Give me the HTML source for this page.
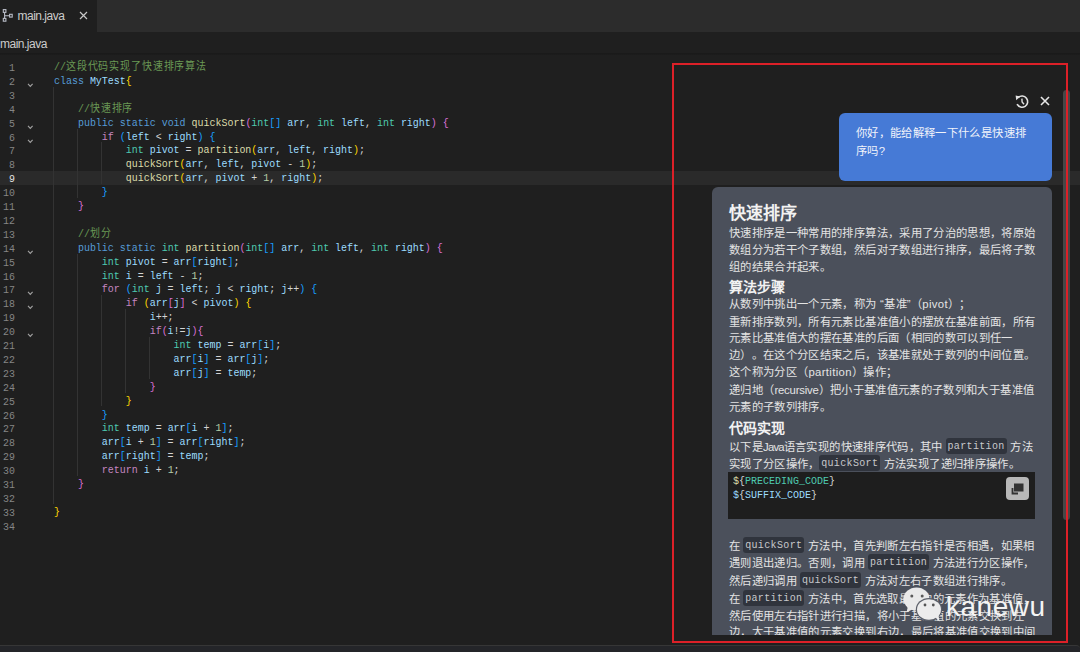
<!DOCTYPE html>
<html lang="zh-CN"><head><meta charset="utf-8">
<style>
*{margin:0;padding:0;box-sizing:border-box}
html,body{text-spacing-trim:space-all;width:1080px;height:652px;overflow:hidden;background:#1f1f1f;font-family:"Liberation Sans",sans-serif}
.abs{position:absolute}
#tabbar{left:0;top:0;width:1080px;height:32px;background:#2c2c2c}
#tab{left:0;top:0;width:97px;height:32px;background:#1f1f1f}
#crumb{left:0;top:32px;width:1080px;height:21px;background:#1f1f1f}
#shadow{left:0;top:53px;width:1080px;height:2px;background:linear-gradient(#191919,#1c1c1c)}
.tabtxt{color:#cccccc;font-size:12px;letter-spacing:-0.5px;white-space:nowrap}
#editor{left:0;top:55px;width:1080px;height:588px}
.hl{left:0;width:1080px;height:13.9px;background:#2a2a2a}
.ln{left:-5px;width:20px;text-align:right;transform-origin:100% 0;transform:scaleX(0.84);font-family:"Liberation Mono",monospace;font-size:11.8px;color:#858585;white-space:nowrap}
.ln.cur{color:#e2e2e2}
.cl{left:53.5px;font-family:"Liberation Mono",monospace;font-size:11.3px;white-space:pre;transform-origin:0 0;transform:scaleX(0.882);color:#d4d4d4;line-height:13.9px}
.fold{left:27px;width:6px;height:4px}
.guide{width:1px;background:#333333}
.c{color:#6a9955}.cj{letter-spacing:1.29px}.k{color:#569cd6}.t{color:#4ec9b0}.f{color:#c586c0}.v{color:#9cdcfe}.fn{color:#dcdcaa}.n{color:#b5cea8}
.b1{color:#ffd700}.b2{color:#da70d6}.b3{color:#179fff}

#redbox{left:672px;top:63px;width:396px;height:580px;border:2px solid #dc2028}
#sbar{left:1063px;top:90px;width:7px;height:430px;background:#474747;border-radius:3.5px}
#bubble{left:839px;top:113px;width:213px;height:68px;background:#467ad6;border-radius:6px}
.btxt{font-weight:500;font-size:11.33px;letter-spacing:0.35px;line-height:16px;color:#f0f3fa;white-space:nowrap}
#apanel{left:712px;top:187px;width:340px;height:448px;background:#4b505b;border-radius:6px 6px 0 0;overflow:hidden}
.pl{font-weight:500;font-size:11.33px;letter-spacing:0.35px;line-height:16px;color:#e4e4e4;white-space:nowrap}
.h1{font-size:17px;line-height:20px;font-weight:bold;color:#f2f2f2;white-space:nowrap}
.h2{font-size:14px;line-height:17px;font-weight:bold;color:#f2f2f2;white-space:nowrap}
.ic{font-family:"Liberation Mono",monospace;font-size:10px;color:#c8c9cc;background:#30343d;border-radius:3px;padding:2.5px 2px;margin-left:-0.7px;position:relative;top:-2.2px}
#cblock{left:16px;top:285px;width:307px;height:47px;background:#1e1e1e}
.cbl{left:5px;font-family:"Liberation Mono",monospace;font-size:11.3px;line-height:13.9px;white-space:pre;transform-origin:0 0;transform:scaleX(0.885)}
.o{color:#d4d4d4}.lt{letter-spacing:-0.2px}
#copy{left:278px;top:5px;width:23px;height:23px;background:#b8b8b8;border-radius:4px}
#wm{left:903px;top:587px;width:42px;height:36px}
#wmt{left:946px;top:590.5px;font-size:28px;letter-spacing:0.5px;line-height:32px;color:#f4f4f4;white-space:nowrap}
#bottom{left:0;top:644.5px;width:1080px;height:8px;background:#242529;border-top:1px solid #363636;border-top-right-radius:4px}
</style></head><body>
<div id="tabbar" class="abs"></div>
<div id="tab" class="abs"></div>
<div id="crumb" class="abs"></div>
<div id="shadow" class="abs"></div>
<div class="abs tabtxt" style="left:17.5px;top:8.5px">main.java</div>
<svg class="abs" style="left:2px;top:8px" width="12" height="14" viewBox="0 0 12 14"><rect x="1.3" y="1.6" width="2.6" height="2.8" fill="none" stroke="#b9bdc8" stroke-width="1.1"/><rect x="1.3" y="10.4" width="2.6" height="2.8" fill="none" stroke="#b9bdc8" stroke-width="1.1"/><rect x="7.6" y="6.3" width="2.6" height="2.8" fill="none" stroke="#b9bdc8" stroke-width="1.1"/><path d="M2.6 4.4 V10.4 M2.6 7.7 H7.6" stroke="#b9bdc8" stroke-width="1.1"/></svg>
<svg class="abs" style="left:78.5px;top:11px" width="9" height="9" viewBox="0 0 9 9"><path d="M1 1 L8 8 M8 1 L1 8" stroke="#c8c8c8" stroke-width="1.2"/></svg>
<div class="abs tabtxt" style="left:0px;top:36.5px">main.java</div>

<div class="abs hl" style="top:171.20px"></div>
<div class="abs guide" style="left:53px;top:86.80px;height:417.00px"></div>
<div class="abs guide" style="left:77px;top:128.50px;height:69.50px"></div>
<div class="abs guide" style="left:77px;top:253.60px;height:222.40px"></div>
<div class="abs guide" style="left:101px;top:142.40px;height:41.70px"></div>
<div class="abs guide" style="left:101px;top:295.30px;height:111.20px"></div>
<div class="abs guide" style="left:125px;top:309.20px;height:83.40px"></div>
<div class="abs guide" style="left:149px;top:337.00px;height:41.70px"></div>
<div class="abs ln" style="top:62.00px;line-height:13.9px">1</div>
<div class="abs ln" style="top:75.90px;line-height:13.9px">2</div>
<div class="abs ln" style="top:89.80px;line-height:13.9px">3</div>
<div class="abs ln" style="top:103.70px;line-height:13.9px">4</div>
<div class="abs ln" style="top:117.60px;line-height:13.9px">5</div>
<div class="abs ln" style="top:131.50px;line-height:13.9px">6</div>
<div class="abs ln" style="top:145.40px;line-height:13.9px">7</div>
<div class="abs ln" style="top:159.30px;line-height:13.9px">8</div>
<div class="abs ln cur" style="top:173.20px;line-height:13.9px">9</div>
<div class="abs ln" style="top:187.10px;line-height:13.9px">10</div>
<div class="abs ln" style="top:201.00px;line-height:13.9px">11</div>
<div class="abs ln" style="top:214.90px;line-height:13.9px">12</div>
<div class="abs ln" style="top:228.80px;line-height:13.9px">13</div>
<div class="abs ln" style="top:242.70px;line-height:13.9px">14</div>
<div class="abs ln" style="top:256.60px;line-height:13.9px">15</div>
<div class="abs ln" style="top:270.50px;line-height:13.9px">16</div>
<div class="abs ln" style="top:284.40px;line-height:13.9px">17</div>
<div class="abs ln" style="top:298.30px;line-height:13.9px">18</div>
<div class="abs ln" style="top:312.20px;line-height:13.9px">19</div>
<div class="abs ln" style="top:326.10px;line-height:13.9px">20</div>
<div class="abs ln" style="top:340.00px;line-height:13.9px">21</div>
<div class="abs ln" style="top:353.90px;line-height:13.9px">22</div>
<div class="abs ln" style="top:367.80px;line-height:13.9px">23</div>
<div class="abs ln" style="top:381.70px;line-height:13.9px">24</div>
<div class="abs ln" style="top:395.60px;line-height:13.9px">25</div>
<div class="abs ln" style="top:409.50px;line-height:13.9px">26</div>
<div class="abs ln" style="top:423.40px;line-height:13.9px">27</div>
<div class="abs ln" style="top:437.30px;line-height:13.9px">28</div>
<div class="abs ln" style="top:451.20px;line-height:13.9px">29</div>
<div class="abs ln" style="top:465.10px;line-height:13.9px">30</div>
<div class="abs ln" style="top:479.00px;line-height:13.9px">31</div>
<div class="abs ln" style="top:492.90px;line-height:13.9px">32</div>
<div class="abs ln" style="top:506.80px;line-height:13.9px">33</div>
<div class="abs ln" style="top:520.70px;line-height:13.9px">34</div>
<svg class="abs" style="left:27px;top:82.90px" width="7" height="5" viewBox="0 0 7 5"><path d="M1 0.9 L3.3 3.3 L5.6 0.9" fill="none" stroke="#a0a0a0" stroke-width="1.15"/></svg>
<svg class="abs" style="left:27px;top:124.60px" width="7" height="5" viewBox="0 0 7 5"><path d="M1 0.9 L3.3 3.3 L5.6 0.9" fill="none" stroke="#a0a0a0" stroke-width="1.15"/></svg>
<svg class="abs" style="left:27px;top:138.50px" width="7" height="5" viewBox="0 0 7 5"><path d="M1 0.9 L3.3 3.3 L5.6 0.9" fill="none" stroke="#a0a0a0" stroke-width="1.15"/></svg>
<svg class="abs" style="left:27px;top:249.70px" width="7" height="5" viewBox="0 0 7 5"><path d="M1 0.9 L3.3 3.3 L5.6 0.9" fill="none" stroke="#a0a0a0" stroke-width="1.15"/></svg>
<svg class="abs" style="left:27px;top:291.40px" width="7" height="5" viewBox="0 0 7 5"><path d="M1 0.9 L3.3 3.3 L5.6 0.9" fill="none" stroke="#a0a0a0" stroke-width="1.15"/></svg>
<svg class="abs" style="left:27px;top:305.30px" width="7" height="5" viewBox="0 0 7 5"><path d="M1 0.9 L3.3 3.3 L5.6 0.9" fill="none" stroke="#a0a0a0" stroke-width="1.15"/></svg>
<svg class="abs" style="left:27px;top:333.10px" width="7" height="5" viewBox="0 0 7 5"><path d="M1 0.9 L3.3 3.3 L5.6 0.9" fill="none" stroke="#a0a0a0" stroke-width="1.15"/></svg>
<div class="abs cl" style="top:61.00px"><span class="c">//</span><span class="c cj">这段代码实现了快速排序算法</span></div>
<div class="abs cl" style="top:74.90px"><span class="k">class</span> <span class="v">MyTest</span><span class="b1">{</span></div>
<div class="abs cl" style="top:102.70px">    <span class="c">//</span><span class="c cj">快速排序</span></div>
<div class="abs cl" style="top:116.60px">    <span class="k">public</span> <span class="k">static</span> <span class="k">void</span> <span class="fn">quickSort</span><span class="b2">(</span><span class="t">int</span><span class="b3">[]</span> <span class="v">arr</span>, <span class="t">int</span> <span class="v">left</span>, <span class="t">int</span> <span class="v">right</span><span class="b2">)</span> <span class="b2">{</span></div>
<div class="abs cl" style="top:130.50px">        <span class="f">if</span> <span class="b3">(</span><span class="v">left</span> &lt; <span class="v">right</span><span class="b3">)</span> <span class="b3">{</span></div>
<div class="abs cl" style="top:144.40px">            <span class="t">int</span> <span class="v">pivot</span> = <span class="fn">partition</span><span class="b1">(</span><span class="v">arr</span>, <span class="v">left</span>, <span class="v">right</span><span class="b1">)</span>;</div>
<div class="abs cl" style="top:158.30px">            <span class="fn">quickSort</span><span class="b1">(</span><span class="v">arr</span>, <span class="v">left</span>, <span class="v">pivot</span> - <span class="n">1</span><span class="b1">)</span>;</div>
<div class="abs cl" style="top:172.20px">            <span class="fn">quickSort</span><span class="b1">(</span><span class="v">arr</span>, <span class="v">pivot</span> + <span class="n">1</span>, <span class="v">right</span><span class="b1">)</span>;</div>
<div class="abs cl" style="top:186.10px">        <span class="b3">}</span></div>
<div class="abs cl" style="top:200.00px">    <span class="b2">}</span></div>
<div class="abs cl" style="top:227.80px">    <span class="c">//</span><span class="c cj">划分</span></div>
<div class="abs cl" style="top:241.70px">    <span class="k">public</span> <span class="k">static</span> <span class="t">int</span> <span class="fn">partition</span><span class="b2">(</span><span class="t">int</span><span class="b3">[]</span> <span class="v">arr</span>, <span class="t">int</span> <span class="v">left</span>, <span class="t">int</span> <span class="v">right</span><span class="b2">)</span> <span class="b2">{</span></div>
<div class="abs cl" style="top:255.60px">        <span class="t">int</span> <span class="v">pivot</span> = <span class="v">arr</span><span class="b3">[</span><span class="v">right</span><span class="b3">]</span>;</div>
<div class="abs cl" style="top:269.50px">        <span class="t">int</span> <span class="v">i</span> = <span class="v">left</span> - <span class="n">1</span>;</div>
<div class="abs cl" style="top:283.40px">        <span class="f">for</span> <span class="b3">(</span><span class="t">int</span> <span class="v">j</span> = <span class="v">left</span>; <span class="v">j</span> &lt; <span class="v">right</span>; <span class="v">j</span>++<span class="b3">)</span> <span class="b3">{</span></div>
<div class="abs cl" style="top:297.30px">            <span class="f">if</span> <span class="b1">(</span><span class="v">arr</span><span class="b2">[</span><span class="v">j</span><span class="b2">]</span> &lt; <span class="v">pivot</span><span class="b1">)</span> <span class="b1">{</span></div>
<div class="abs cl" style="top:311.20px">                <span class="v">i</span>++;</div>
<div class="abs cl" style="top:325.10px">                <span class="f">if</span><span class="b2">(</span><span class="v">i</span>!=<span class="v">j</span><span class="b2">)</span><span class="b2">{</span></div>
<div class="abs cl" style="top:339.00px">                    <span class="t">int</span> <span class="v">temp</span> = <span class="v">arr</span><span class="b3">[</span><span class="v">i</span><span class="b3">]</span>;</div>
<div class="abs cl" style="top:352.90px">                    <span class="v">arr</span><span class="b3">[</span><span class="v">i</span><span class="b3">]</span> = <span class="v">arr</span><span class="b3">[</span><span class="v">j</span><span class="b3">]</span>;</div>
<div class="abs cl" style="top:366.80px">                    <span class="v">arr</span><span class="b3">[</span><span class="v">j</span><span class="b3">]</span> = <span class="v">temp</span>;</div>
<div class="abs cl" style="top:380.70px">                <span class="b2">}</span></div>
<div class="abs cl" style="top:394.60px">            <span class="b1">}</span></div>
<div class="abs cl" style="top:408.50px">        <span class="b3">}</span></div>
<div class="abs cl" style="top:422.40px">        <span class="t">int</span> <span class="v">temp</span> = <span class="v">arr</span><span class="b3">[</span><span class="v">i</span> + <span class="n">1</span><span class="b3">]</span>;</div>
<div class="abs cl" style="top:436.30px">        <span class="v">arr</span><span class="b3">[</span><span class="v">i</span> + <span class="n">1</span><span class="b3">]</span> = <span class="v">arr</span><span class="b3">[</span><span class="v">right</span><span class="b3">]</span>;</div>
<div class="abs cl" style="top:450.20px">        <span class="v">arr</span><span class="b3">[</span><span class="v">right</span><span class="b3">]</span> = <span class="v">temp</span>;</div>
<div class="abs cl" style="top:464.10px">        <span class="f">return</span> <span class="v">i</span> + <span class="n">1</span>;</div>
<div class="abs cl" style="top:478.00px">    <span class="b2">}</span></div>
<div class="abs cl" style="top:505.80px"><span class="b1">}</span></div>
<div class="abs" id="sbar"></div>
<svg class="abs" style="left:1013px;top:93px" width="18" height="17" viewBox="0 0 18 17"><path d="M5.2 4.6 A5.6 5.6 0 1 1 4.1 11.2" fill="none" stroke="#e2e2e2" stroke-width="1.6"/><path d="M2.6 2.6 L7.4 3.2 L3.2 7.2 Z" fill="#e2e2e2"/><path d="M8.9 5.6 L9.1 9 L11 11.2" fill="none" stroke="#e2e2e2" stroke-width="1.4"/></svg>
<svg class="abs" style="left:1040px;top:96px" width="10" height="10" viewBox="0 0 10 10"><path d="M1 1 L9 9 M9 1 L1 9" stroke="#e6e6e6" stroke-width="1.6"/></svg>
<div class="abs" id="bubble"></div>
<div class="abs btxt" style="left:856px;top:125.30px">你好，能给解释一下什么是快速排</div>
<div class="abs btxt" style="left:856px;top:143.10px">序吗?</div>
<div class="abs" id="apanel"><div class="abs h1" style="left:17px;top:16.60px">快速排序</div><div class="abs h2" style="left:17px;top:91.60px">算法步骤</div><div class="abs h2" style="left:17px;top:232.80px">代码实现</div><div class="abs pl" style="left:17px;top:38.00px">快速排序是一种常用的排序算法，采用了分治的思想，将原始</div><div class="abs pl" style="left:17px;top:54.90px">数组分为若干个子数组，然后对子数组进行排序，最后将子数</div><div class="abs pl" style="left:17px;top:71.80px">组的结果合并起来。</div><div class="abs pl" style="left:17px;top:109.30px">从数列中挑出一个元素，称为 “基准”（pivot）；</div><div class="abs pl" style="left:17px;top:126.50px">重新排序数列，所有元素比基准值小的摆放在基准前面，所有</div><div class="abs pl" style="left:17px;top:143.10px">元素比基准值大的摆在基准的后面（相同的数可以到任一</div><div class="abs pl" style="left:17px;top:159.90px">边）。在这个分区结束之后，该基准就处于数列的中间位置。</div><div class="abs pl" style="left:17px;top:177.20px">这个称为分区（partition）操作；</div><div class="abs pl" style="left:17px;top:194.50px">递归地（<span class="lt">recursive</span>）把小于基准值元素的子数列和大于基准值</div><div class="abs pl" style="left:17px;top:211.70px">元素的子数列排序。</div><div class="abs pl" style="left:17px;top:251.50px">以下是<span class="lt" style="letter-spacing:-0.8px">Java</span>语言实现的快速排序代码，其中 <span class="ic">partition</span> 方法</div><div class="abs pl" style="left:17px;top:268.80px">实现了分区操作，<span class="ic">quickSort</span> 方法实现了递归排序操作。</div><div class="abs pl" style="left:17px;top:350.50px">在 <span class="ic">quickSort</span> 方法中，首先判断左右指针是否相遇，如果相</div><div class="abs pl" style="left:17px;top:368.00px">遇则退出递归。否则，调用 <span class="ic">partition</span> 方法进行分区操作，</div><div class="abs pl" style="left:17px;top:385.70px">然后递归调用 <span class="ic">quickSort</span> 方法对左右子数组进行排序。</div><div class="abs pl" style="left:17px;top:403.50px">在 <span class="ic">partition</span> 方法中，首先选取最右边的元素作为基准值，</div><div class="abs pl" style="left:17px;top:421.30px">然后使用左右指针进行扫描，将小于基准值的元素交换到左</div><div class="abs pl" style="left:17px;top:437.00px">边，大于基准值的元素交换到右边，最后将基准值交换到中间</div><div class="abs" id="cblock"><div class="abs cbl" style="top:3px"><span class="fn">$</span><span class="o">{</span><span class="t">PRECEDING_CODE</span><span class="o">}</span></div><div class="abs cbl" style="top:17px"><span class="v">$</span><span class="o">{</span><span class="v">SUFFIX_CODE</span><span class="o">}</span></div><div class="abs" id="copy"><svg width="23" height="23" viewBox="0 0 23 23"><path d="M6.5 11 V16.5 H12" fill="none" stroke="#333" stroke-width="1.8"/><rect x="8" y="6.5" width="9.5" height="8" fill="#333"/></svg></div></div></div>
<div class="abs" id="wm"><svg width="42" height="36" viewBox="0 0 42 36"><ellipse cx="13.5" cy="12" rx="13" ry="11.5" fill="#e9e9e9"/><path d="M5 19 L3.5 25.5 L11 21.5 Z" fill="#e9e9e9"/><circle cx="8.8" cy="9" r="1.5" fill="#5a5a5a"/><circle cx="19.2" cy="9" r="1.5" fill="#5a5a5a"/><ellipse cx="26" cy="22.5" rx="13.2" ry="11.5" fill="#5b5f68"/><ellipse cx="26" cy="22.5" rx="12" ry="10.3" fill="#ececec"/><path d="M32 30 L36.5 34.5 L35.5 28 Z" fill="#ececec"/><circle cx="22" cy="18" r="1.4" fill="#555"/><circle cx="30.3" cy="18" r="1.4" fill="#555"/></svg></div>
<div class="abs" id="wmt">kanewu</div>
<div class="abs" id="redbox"></div>
<div id="bottom" class="abs"></div>
</body></html>
